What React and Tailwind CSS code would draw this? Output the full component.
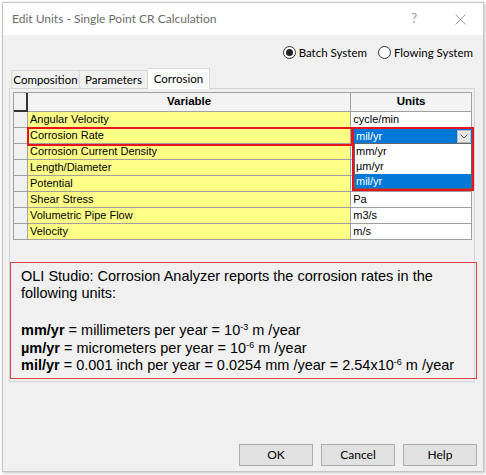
import React from "react";

const ui = { fontFamily: "Lato, 'Noto Sans', sans-serif" };
const arial = { fontFamily: "'Liberation Sans', Arial, sans-serif" };

function Radio({ checked, label }) {
  return (
    <div className="flex items-center gap-[3px]">
      <div className="w-[13px] h-[13px] rounded-full border border-[#333] bg-white flex items-center justify-center">
        {checked && <div className="w-[7px] h-[7px] rounded-full bg-[#222]" />}
      </div>
      <span className="text-[11.5px] text-black" style={ui}>{label}</span>
    </div>
  );
}

function Btn({ children }) {
  return (
    <div
      className="w-[74px] h-[22px] border border-[#adadad] bg-[#e1e1e1] flex items-center justify-center text-[12px] text-black"
      style={ui}
    >
      {children}
    </div>
  );
}

function Sup({ children }) {
  return <span className="relative -top-[5px] text-[9px] leading-none">{children}</span>;
}

export default function App() {
  const rows = [
    ["Angular Velocity", "cycle/min"],
    ["Corrosion Rate", ""],
    ["Corrosion Current Density", ""],
    ["Length/Diameter", ""],
    ["Potential", ""],
    ["Shear Stress", "Pa"],
    ["Volumetric Pipe Flow", "m3/s"],
    ["Velocity", "m/s"],
  ];

  return (
    <div className="w-[486px] h-[475px] bg-white pt-[2px] pl-[2px]">
      <div className="w-[482px] h-[470px] border border-[#c4c4c4] flex flex-col shadow-[1px_1px_3px_rgba(0,0,0,0.25)]">
        {/* Title bar */}
        <div className="h-[32px] bg-white flex items-center pl-[9px] pr-[14px]">
          <span className="text-[12px] text-[#6b6b6b]" style={ui}>
            Edit Units - Single Point CR Calculation
          </span>
          <span className="ml-auto text-[13px] text-[#9a9a9a] mr-[38px]" style={ui}>?</span>
          <svg width="11" height="11" viewBox="0 0 11 11" className="mr-[3px]">
            <path d="M0.5 0.5 L10.5 10.5 M10.5 0.5 L0.5 10.5" stroke="#9a9a9a" strokeWidth="1" />
          </svg>
        </div>

        {/* Body */}
        <div className="flex-1 bg-[#f0f0f0] flex flex-col">
          {/* Radio row */}
          <div className="h-[35px] flex items-center justify-end pr-[10px] gap-[11px]">
            <Radio checked label="Batch System" />
            <Radio label="Flowing System" />
          </div>

          {/* Tabs */}
          <div className="h-[18px] flex items-end pl-[8px] relative z-10" style={ui}>
            <div className="h-[18px] w-[69px] border border-[#d9d9d9] border-b-0 bg-[#f0f0f0] flex items-center justify-center text-[11.5px] text-black">
              Composition
            </div>
            <div className="h-[18px] w-[68px] border border-[#d9d9d9] border-b-0 border-l-0 bg-[#f0f0f0] flex items-center justify-center text-[11.5px] text-black">
              Parameters
            </div>
            <div className="h-[21px] -mb-[1px] w-[62px] border border-[#d9d9d9] border-b-0 border-l-0 bg-white flex items-start pt-[1px] justify-center text-[11.5px] text-black">
              Corrosion
            </div>
          </div>

          {/* Panel */}
          <div className="ml-[6px] w-[466px] h-[294px] border border-[#d4d4d4] pl-[3px] pt-[3px] flex flex-col">
            {/* Grid */}
            <div className="relative w-[459px] border-l border-t border-[#a0a0a0] bg-white" style={arial}>
              {/* header */}
              <div className="flex h-[19px]">
                <div className="w-[14px] border-r-2 border-b-2 border-r-[#333] border-b-[#333] bg-[#f0f0f0]" />
                <div className="w-[324px] border-r border-b border-[#a0a0a0] bg-[#f3f3f3] flex items-center justify-center text-[11.5px] font-bold text-black">
                  Variable
                </div>
                <div className="w-[121px] border-r border-b border-[#a0a0a0] bg-[#f3f3f3] flex items-center justify-center text-[11.5px] font-bold text-black">
                  Units
                </div>
              </div>
              {rows.map(([v, u], i) => (
                <div key={i} className="flex h-[16px]">
                  <div className="w-[14px] border-r border-b border-[#a0a0a0] bg-[#f0f0f0]" />
                  <div className="w-[324px] border-r border-b border-[#a0a0a0] bg-[#ffff88] flex items-center pl-[2px] text-[11px] text-black leading-none">
                    {v}
                  </div>
                  <div className="w-[121px] border-r border-b border-[#a0a0a0] bg-white flex items-center pl-[2px] text-[11px] text-black leading-none">
                    {u}
                  </div>
                </div>
              ))}

              {/* Variable highlight */}
              <div className="absolute left-[13px] top-[34px] w-[326px] h-[19px] border-2 border-[#e8141c]" />

              {/* Dropdown overlay */}
              <div className="absolute left-[338px] top-[34px] w-[122px] h-[64px] border-2 border-[#e8141c] bg-white flex flex-col">
                <div className="h-[16px] bg-[#0078d7] flex items-center pl-[2px] text-[11px] text-white leading-none">
                  <span>mil/yr</span>
                  <div className="ml-auto mr-[1px] w-[14px] h-[13px] bg-[#e6e6e6] border border-[#b8b8b8] flex items-center justify-center">
                    <svg width="8" height="5" viewBox="0 0 8 5">
                      <path d="M0.5 0.5 L4 4 L7.5 0.5" stroke="#555" strokeWidth="1" fill="none" />
                    </svg>
                  </div>
                </div>
                <div className="flex-1 border border-[#646464] flex flex-col">
                  <div className="h-[15px] flex items-center pl-[1px] text-[11px] text-black leading-none">mm/yr</div>
                  <div className="h-[15px] flex items-center pl-[1px] text-[11px] text-black leading-none">µm/yr</div>
                  <div className="h-[14px] bg-[#0078d7] flex items-center pl-[1px] text-[11px] text-white leading-none">mil/yr</div>
                </div>
              </div>
            </div>

            {/* Note */}
            <div
              className="-ml-[3px] mt-[22px] w-[467px] h-[117px] border border-[#dc4048] pl-[10px] pt-[5px] text-[14.5px] text-black"
              style={arial}
            >
              <div className="leading-[16.5px]">
                OLI Studio: Corrosion Analyzer reports the corrosion rates in the following units:
              </div>
              <div className="mt-[21px] leading-[17.5px]">
                <div>
                  <b>mm/yr</b> = millimeters per year = 10<Sup>-3</Sup> m /year
                </div>
                <div>
                  <b>µm/yr</b> = micrometers per year = 10<Sup>-6</Sup> m /year
                </div>
                <div>
                  <b>mil/yr</b> = 0.001 inch per year = 0.0254 mm /year = 2.54x10<Sup>-6</Sup> m /year
                </div>
              </div>
            </div>
          </div>

          {/* Buttons */}
          <div className="mt-[62px] flex justify-end gap-[8px] pr-[6px]">
            <Btn>OK</Btn>
            <Btn>Cancel</Btn>
            <Btn>Help</Btn>
          </div>
        </div>
      </div>
    </div>
  );
}
